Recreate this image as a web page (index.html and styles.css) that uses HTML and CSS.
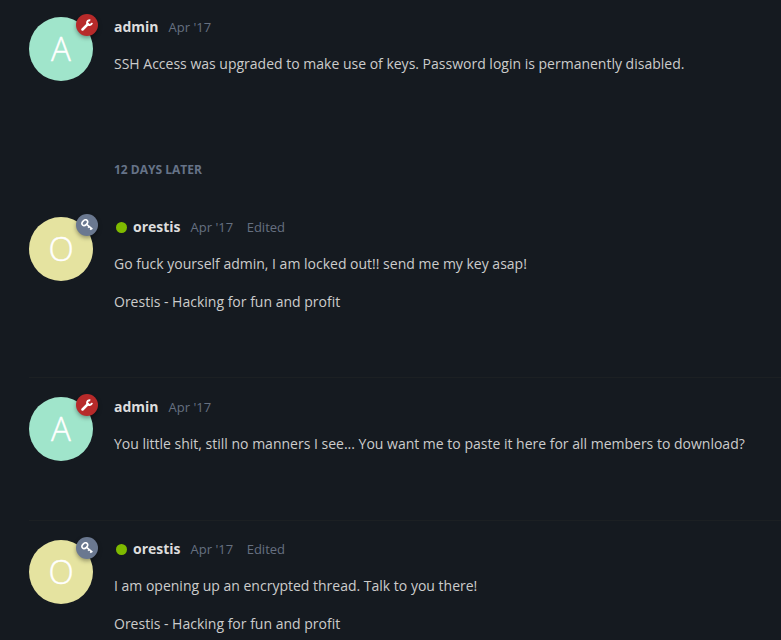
FILE: index.html
```html
<!DOCTYPE html>
<html lang="en">
<head>
<meta charset="utf-8">
<title>Discussion</title>
<link rel="stylesheet" href="styles.css">
</head>
<body>
<svg class="symbols" aria-hidden="true">
  <symbol id="wrench" viewBox="0 0 12 12"><g fill="none" stroke="currentColor"><path d="M1.5 10.5L7 5" stroke-width="2.5" stroke-linecap="round"/><path d="M9.3 1.2C7.4 .9 6 2.2 6.1 3.9C6.2 5.4 7.3 6.2 8.7 6C9.9 5.8 10.8 5 11 3.8" stroke-width="2"/></g></symbol>
  <symbol id="key" viewBox="0 0 12 12"><g fill="none" stroke="currentColor" stroke-width="1.6"><ellipse cx="3.8" cy="3.7" rx="3.2" ry="2.3" transform="rotate(-45 3.8 3.7)"/><path d="M5.3 5.2L11.4 10.1M8.2 7.5L7.2 8.8M10.4 9.2L9.3 10.7"/></g></symbol>
</svg>
<main class="stream">
  <article class="post post-first">
    <div class="avatar mint">A<span class="badge red"><svg><use href="#wrench"/></svg></span></div>
    <div class="content">
      <header><b>admin</b><time>Apr '17</time></header>
      <p>SSH Access was upgraded to make use of keys. Password login is permanently disabled.</p>
    </div>
  </article>
  <div class="gap">12 days later</div>
  <article class="post">
    <div class="avatar yellow">O<span class="badge slate"><svg><use href="#key"/></svg></span></div>
    <div class="content">
      <header><i class="online"></i><b>orestis</b><time>Apr '17</time><span class="edited">Edited</span></header>
      <p>Go fuck yourself admin, I am locked out!! send me my key asap!</p>
      <p>Orestis - Hacking for fun and profit</p>
    </div>
  </article>
  <article class="post post-short ruled">
    <div class="avatar mint">A<span class="badge red"><svg><use href="#wrench"/></svg></span></div>
    <div class="content">
      <header><b>admin</b><time>Apr '17</time></header>
      <p>You little shit, still no manners I see... You want me to paste it here for all members to download?</p>
    </div>
  </article>
  <article class="post post-last ruled">
    <div class="avatar yellow">O<span class="badge slate"><svg><use href="#key"/></svg></span></div>
    <div class="content">
      <header><i class="online"></i><b>orestis</b><time>Apr '17</time><span class="edited">Edited</span></header>
      <p>I am opening up an encrypted thread. Talk to you there!</p>
      <p>Orestis - Hacking for fun and profit</p>
    </div>
  </article>
</main>
</body>
</html>
```
FILE: styles.css
```css
* { box-sizing: border-box; }
body {
  margin: 0;
  background: #151a20;
  color: #ccc;
  font: 14px/24px "Open Sans", sans-serif;
}
.symbols { display: none; }
.stream { padding: 0 0 0 29px; }
.post {
  display: flex;
  gap: 21px;
  height: 180px;
  padding-top: 20px;
}
.post-first { height: 140px; padding-top: 17px; }
.post-short { height: 143px; }
.ruled { border-top: 1px solid #1c2023; padding-top: 19px; }
.post-last { height: 120px; }
.post-last .content { margin-top: -1px; }
.gap {
  height: 57px;
  padding: 18px 0 0 85px;
  color: #667388;
  font-size: 12px;
  font-weight: 700;
  text-transform: uppercase;
}
.avatar {
  position: relative;
  flex: none;
  width: 64px;
  height: 64px;
  border-radius: 50%;
  color: #fff;
  font-size: 33px;
  font-weight: 300;
  line-height: 64px;
  text-align: center;
  -webkit-text-stroke: .4px #fff;
}
.mint { background: #a0e5cb; }
.yellow { background: #e5e3a0; }
.badge {
  position: absolute;
  top: -3px;
  right: -5px;
  display: flex;
  align-items: center;
  justify-content: center;
  width: 22px;
  height: 22px;
  border-radius: 50%;
  box-shadow: 0 2px 4px rgba(0, 0, 0, .35);
}
.badge svg { width: 12px; height: 12px; }
.red { background: #b72a2a; }
.slate { background: #6a7890; }
.content { flex: 1; min-width: 0; white-space: nowrap; }
header {
  display: flex;
  align-items: center;
  height: 20px;
  margin-bottom: 15px;
}
header b { color: #ddd; font-weight: 700; }
time, .edited { color: #667080; font-size: 13px; }
time { margin-left: 10px; }
.edited { margin-left: 13.5px; }
.online {
  width: 11px;
  height: 11px;
  margin: 1px 6px 0 2px;
  border-radius: 50%;
  background: #7fba00;
}
p { margin: 0 0 14px; }
p:last-child { margin-bottom: 0; }
```
